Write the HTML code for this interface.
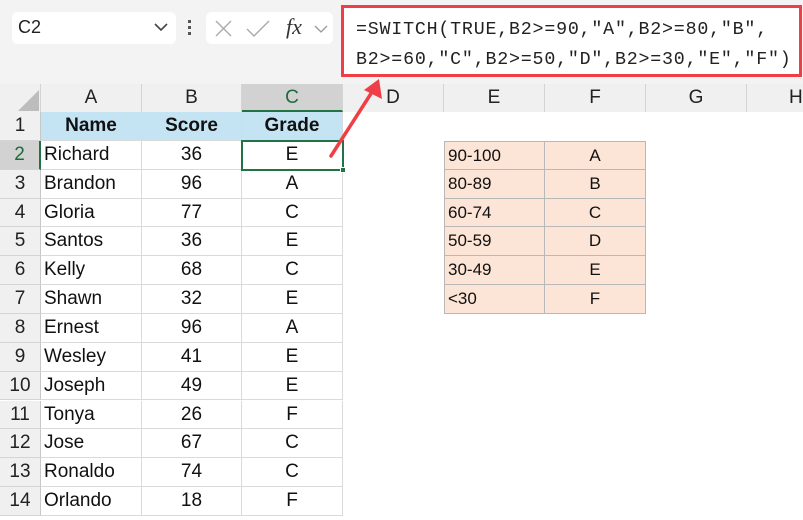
<!DOCTYPE html>
<html><head><meta charset="utf-8"><style>
*{margin:0;padding:0;box-sizing:border-box}
body{width:803px;height:520px;overflow:hidden;background:#fff;font-family:"Liberation Sans","DejaVu Sans",sans-serif;position:relative}
.top{position:absolute;left:0;top:0;width:803px;height:84px;background:#f3f3f3}
.nb{position:absolute;left:12px;top:12px;width:164px;height:32px;background:#fff;border-radius:6px;font-size:18px;color:#222;padding:5px 6px}
.fxb{position:absolute;left:206px;top:12px;width:127px;height:32px;background:#fff;border-radius:6px}
.fb{position:absolute;left:341px;top:5px;width:461px;height:72px;border:3px solid #ef3e45;background:#fff;font-family:"Liberation Mono",monospace;font-size:18.3px;letter-spacing:0.8px;color:#222;padding:7px 0 0 12px;line-height:30px;white-space:pre}
.ch{position:absolute;top:84px;height:28px;background:#f0f0f0;border-right:1px solid #d4d4d4;text-align:center;font-size:19px;color:#222;line-height:28px}
.rh{position:absolute;left:0;width:41px;background:#f0f0f0;border-bottom:1px solid #d4d4d4;border-right:1px solid #c8c8c8;text-align:center;font-size:19px;color:#222}
.c{position:absolute;font-size:19px;color:#111;border-right:1px solid #dadada;border-bottom:1px solid #dadada;white-space:nowrap}
.p{position:absolute;background:#fce4d6;border-right:1px solid #b8b8b8;border-bottom:1px solid #b8b8b8;font-size:17px;color:#111;font-family:"Liberation Sans",Arial,sans-serif}
</style></head><body>
<div class="top"></div>
<div class="nb">C2<svg style="position:absolute;right:8px;top:11px" width="14" height="9"><path d="M1 1l6 6 6-6" stroke="#444" stroke-width="1.6" fill="none"/></svg></div>
<div style="position:absolute;left:188px;top:20px;width:4px;height:18px"><div style="width:3px;height:3px;background:#555;margin-bottom:3px"></div><div style="width:3px;height:3px;background:#555;margin-bottom:3px"></div><div style="width:3px;height:3px;background:#555"></div></div>
<div class="fxb">
<svg style="position:absolute;left:9px;top:8px" width="17" height="17"><path d="M1 1l15 15M16 1L1 16" stroke="#aaa" stroke-width="1.4"/></svg>
<svg style="position:absolute;left:40px;top:8px" width="24" height="17"><path d="M1 9l7 7L23 1" stroke="#aaa" stroke-width="1.4" fill="none"/></svg>
<span style="position:absolute;left:80px;top:2px;font-family:'Liberation Serif',serif;font-style:italic;font-size:22px;color:#333">fx</span>
<svg style="position:absolute;left:108px;top:13px" width="14" height="8"><path d="M1 1l6 6 6-6" stroke="#999" stroke-width="1.3" fill="none"/></svg>
</div>
<div class="fb">=SWITCH(TRUE,B2&gt;=90,"A",B2&gt;=80,"B",
B2&gt;=60,"C",B2&gt;=50,"D",B2&gt;=30,"E","F")</div>

<div class="ch" style="left:0;width:41px"><svg width="38" height="28" style="position:absolute;left:2px;top:0"><path d="M37 6L37 27L16 27Z" fill="#bdbdbd"/></svg></div>
<div class="ch" style="left:41px;width:101px">A</div>
<div class="ch" style="left:142px;width:100px">B</div>
<div class="ch" style="left:242px;width:101px;background:#d2d2d2;color:#1e6b3a;border-bottom:2px solid #217346">C</div>
<div class="ch" style="left:343px;width:101px">D</div>
<div class="ch" style="left:444px;width:101px">E</div>
<div class="ch" style="left:545px;width:101px">F</div>
<div class="ch" style="left:646px;width:101px">G</div>
<div class="ch" style="left:747px;width:60px;text-align:left;padding-left:42px">H</div>

<div id="g"></div>
<script>
var d=[["Name","Score","Grade"],["Richard",36,"E"],["Brandon",96,"A"],["Gloria",77,"C"],["Santos",36,"E"],["Kelly",68,"C"],["Shawn",32,"E"],["Ernest",96,"A"],["Wesley",41,"E"],["Joseph",49,"E"],["Tonya",26,"F"],["Jose",67,"C"],["Ronaldo",74,"C"],["Orlando",18,"F"]];
var h="",R=28.85;
for(var i=0;i<14;i++){var t=112+i*R;
var lh="line-height:"+R+"px;height:"+R+"px;top:"+t+"px;";
var hs=i==1?"background:#d2d2d2;color:#1e6b3a;border-right:2px solid #217346;":"";
h+='<div class="rh" style="'+lh+hs+'">'+(i+1)+'</div>';
var b=i==0?"background:#c4e4f4;font-weight:bold;":"";
h+='<div class="c" style="'+lh+b+'left:41px;width:101px;padding-left:'+(i==0?0:3)+'px;'+(i==0?'text-align:center;':'')+'">'+d[i][0]+'</div>';
h+='<div class="c" style="'+lh+b+'left:142px;width:100px;text-align:center">'+d[i][1]+'</div>';
h+='<div class="c" style="'+lh+b+'left:242px;width:101px;text-align:center">'+d[i][2]+'</div>';}
var p=[["90-100","A"],["80-89","B"],["60-74","C"],["50-59","D"],["30-49","E"],["<30","F"]];
for(var j=0;j<6;j++){var t=112+(j+1)*R;var lh="line-height:"+R+"px;height:"+R+"px;top:"+t+"px;";
h+='<div class="p" style="'+lh+'left:444px;width:101px;padding-left:3px;border-left:1px solid #b8b8b8;'+(j==0?'border-top:1px solid #b8b8b8;':'')+'">'+p[j][0].replace("<","&lt;")+'</div>';
h+='<div class="p" style="'+lh+'left:545px;width:101px;text-align:center;'+(j==0?'border-top:1px solid #b8b8b8;':'')+'">'+p[j][1]+'</div>';}
document.getElementById("g").innerHTML=h;
</script>
<div style="position:absolute;left:241px;top:140px;width:103px;height:31px;border:2px solid #217346"></div>
<div style="position:absolute;left:340px;top:167px;width:6px;height:6px;background:#217346;border:1px solid #fff"></div>
<svg style="position:absolute;left:0;top:0" width="803" height="520"><line x1="331" y1="156" x2="372" y2="92" stroke="#ef3e45" stroke-width="3.5" stroke-linecap="round"/><path d="M379 79L382 99L364 90Z" fill="#ef3e45"/></svg>
</body></html>
